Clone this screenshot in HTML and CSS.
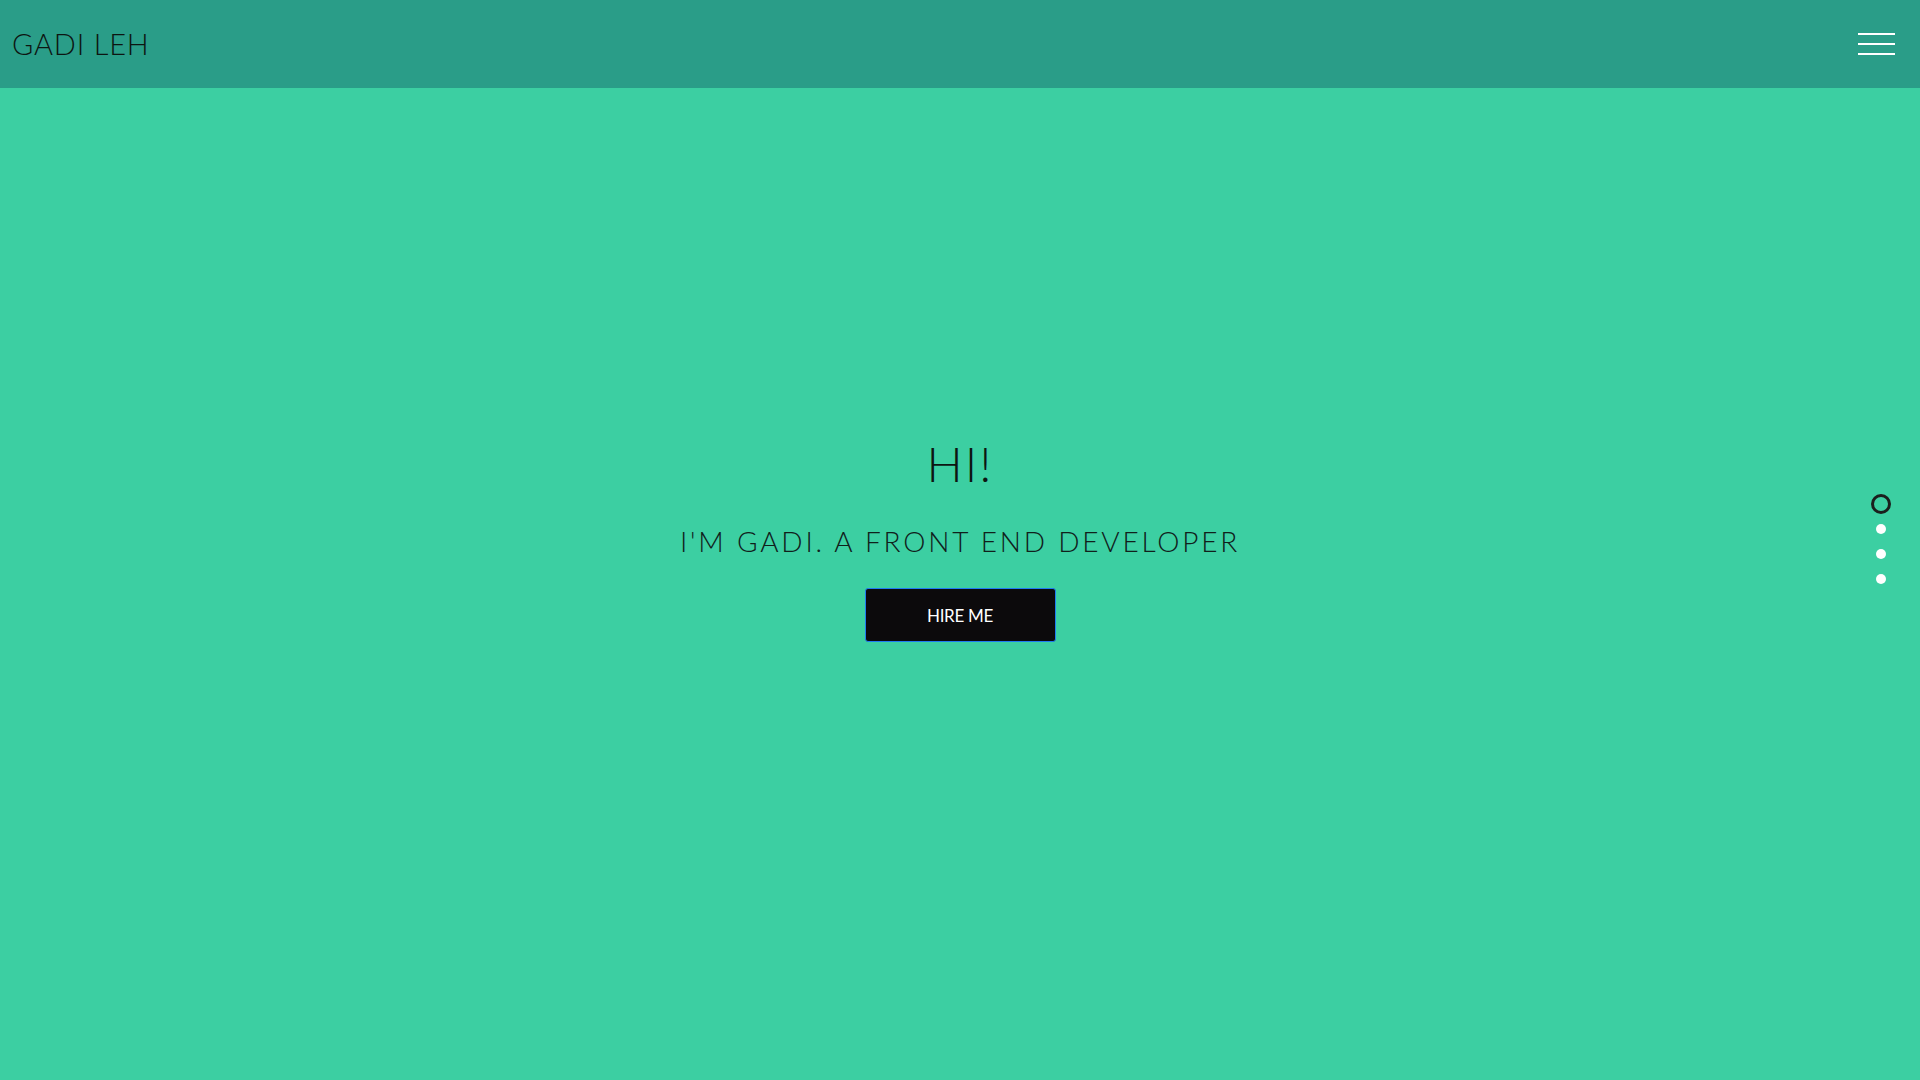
FILE: index.html
```html
<!DOCTYPE html>
<html lang="en">
<head>
<meta charset="utf-8">
<title>Gadi Leh</title>
<link rel="stylesheet" href="styles.css">
</head>
<body>
<header class="topbar">
  <a class="brand" href="#">GADI LEH</a>
  <button class="burger" aria-label="Menu">
    <span></span><span></span><span></span>
  </button>
</header>

<main class="hero">
  <h1 class="hero-title">HI!</h1>
  <h2 class="hero-sub">I'M GADI. A FRONT END DEVELOPER</h2>
  <a class="hire" href="#">HIRE ME</a>
</main>

<nav class="dots">
  <span class="dot active"></span>
  <span class="dot"></span>
  <span class="dot"></span>
  <span class="dot"></span>
</nav>
</body>
</html>
```

FILE: styles.css
```css
* { box-sizing: border-box; }

html, body {
  margin: 0;
  padding: 0;
  height: 100%;
}

body {
  background: #3ccfa2;
  font-family: Lato, "Open Sans", sans-serif;
  color: #111;
  overflow: hidden;
}

.topbar {
  position: fixed;
  top: 0;
  left: 0;
  right: 0;
  height: 88px;
  background: #2a9d88;
  display: flex;
  align-items: center;
  justify-content: space-between;
  padding: 0 25px 0 12px;
  z-index: 10;
}

.brand {
  font-size: 29px;
  font-weight: 300;
  line-height: 1.2;
  letter-spacing: 0.8px;
  color: #0d1512;
  text-decoration: none;
}

.burger {
  width: 37px;
  height: 22px;
  padding: 0;
  border: 0;
  background: transparent;
  display: flex;
  flex-direction: column;
  justify-content: space-between;
  cursor: pointer;
}

.burger span {
  display: block;
  height: 2px;
  width: 100%;
  background: #fff;
}

.hero {
  height: 100vh;
  display: flex;
  flex-direction: column;
  align-items: center;
  justify-content: center;
  padding-bottom: 3px;
}

.hero-title {
  margin: 0;
  font-size: 48px;
  font-weight: 300;
  line-height: 1.2;
  letter-spacing: 2px;
  color: #0d1512;
}

.hero-sub {
  margin: 32px 0 0;
  font-size: 28px;
  font-weight: 300;
  line-height: 1.2;
  letter-spacing: 2.8px;
  color: #10201b;
}

.hire {
  margin-top: 30px;
  width: 191px;
  height: 54px;
  display: flex;
  align-items: center;
  justify-content: center;
  background: #0c0a0c;
  border: 1px solid #1f7cf2;
  border-radius: 3px;
  color: #fff;
  font-size: 17px;
  font-weight: 400;
  letter-spacing: -0.3px;
  text-decoration: none;
}

.dots {
  position: fixed;
  right: 29px;
  top: 50%;
  transform: translateY(-50%);
  display: flex;
  flex-direction: column;
  align-items: center;
  gap: 15px;
  margin-top: -1px;
}

.dot {
  width: 10px;
  height: 10px;
  border-radius: 50%;
  background: #fff;
}

.dot.active {
  width: 20px;
  height: 20px;
  margin-bottom: -5px;
  background: transparent;
  border: 3px solid #1b1f1d;
}
```
